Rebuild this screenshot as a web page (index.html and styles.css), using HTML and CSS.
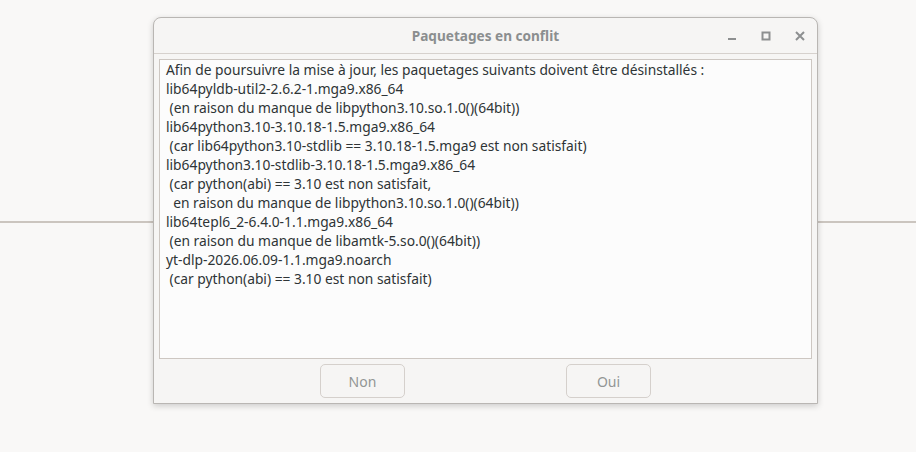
FILE: index.html
```html
<!DOCTYPE html>
<html lang="fr">
<head>
  <meta charset="UTF-8" />
  <title>Paquetages en conflit</title>
  <link rel="stylesheet" href="styles.css">
</head>
<body>
  <div class="desk">
    <div class="rule"></div>
    <div class="dialog">
      <div class="titlebar">
        <span class="title">Paquetages en conflit</span>
        <div class="controls">
          <span class="ctl">
            <svg width="12" height="12" viewBox="0 0 12 12"><rect x="2" y="8" width="8" height="2" fill="#8d8f90"/></svg>
          </span>
          <span class="ctl">
            <svg width="12" height="12" viewBox="0 0 12 12"><rect x="2.5" y="2.5" width="7" height="7" fill="none" stroke="#8d8f90" stroke-width="2"/></svg>
          </span>
          <span class="ctl">
            <svg width="12" height="12" viewBox="0 0 12 12"><path d="M2 2 L10 10 M10 2 L2 10" stroke="#8d8f90" stroke-width="2"/></svg>
          </span>
        </div>
      </div>
      <div class="body">
        <div class="textview">Afin de poursuivre la mise à jour, les paquetages suivants doivent être désinstallés :
lib64pyldb-util2-2.6.2-1.mga9.x86_64
 (en raison du manque de libpython3.10.so.1.0()(64bit))
lib64python3.10-3.10.18-1.5.mga9.x86_64
 (car lib64python3.10-stdlib == 3.10.18-1.5.mga9 est non satisfait)
lib64python3.10-stdlib-3.10.18-1.5.mga9.x86_64
 (car python(abi) == 3.10 est non satisfait,
  en raison du manque de libpython3.10.so.1.0()(64bit))
lib64tepl6_2-6.4.0-1.1.mga9.x86_64
 (en raison du manque de libamtk-5.so.0()(64bit))
yt-dlp-2026.06.09-1.1.mga9.noarch
 (car python(abi) == 3.10 est non satisfait)</div>
        <div class="actions">
          <button class="btn">Non</button>
          <button class="btn">Oui</button>
        </div>
      </div>
    </div>
  </div>
</body>
</html>
```

FILE: styles.css
```css
html, body {
  margin: 0;
  height: 100%;
}
body {
  background: #f9f8f7;
  font-family: "Noto Sans", "Open Sans", sans-serif;
  overflow: hidden;
}
.desk {
  position: relative;
  height: 452px;
  padding-top: 17px;
  box-sizing: border-box;
}
.rule {
  position: absolute;
  left: 0;
  right: 0;
  top: 221px;
  height: 2px;
  background: #cbc5bf;
}
.dialog {
  position: relative;
  margin-left: 153px;
  width: 665px;
  height: 387px;
  box-sizing: border-box;
  background: #f6f5f4;
  border: 1px solid #b9b6b3;
  border-radius: 8px 8px 0 0;
  box-shadow: 0 2px 6px rgba(0, 0, 0, 0.18);
  display: flex;
  flex-direction: column;
}
.titlebar {
  height: 36px;
  border-bottom: 1px solid #d6d1cd;
  display: flex;
  align-items: center;
  justify-content: center;
  position: relative;
}
.title {
  font-weight: bold;
  font-size: 13.6px;
  color: #8b8e8f;
}
.controls {
  position: absolute;
  right: 11px;
  top: 0;
  height: 36px;
  display: flex;
  align-items: center;
  gap: 22px;
}
.ctl {
  width: 12px;
  height: 12px;
  display: flex;
}
.body {
  flex: 1;
  padding: 5px 5px 5px 5px;
  display: flex;
  flex-direction: column;
}
.textview {
  height: 300px;
  box-sizing: border-box;
  background: #fcfcfc;
  border: 1px solid #cdc7c2;
  padding: 0 6px;
  white-space: pre;
  font-size: 13.8px;
  line-height: 19px;
  color: #2e3436;
}
.actions {
  display: flex;
  justify-content: center;
  gap: 161px;
  padding-top: 5px;
}
.btn {
  width: 85px;
  height: 34px;
  background: #f6f5f4;
  border: 1px solid #d5d0cc;
  border-radius: 5px;
  font-family: inherit;
  font-size: 14px;
  color: #929595;
}
```
